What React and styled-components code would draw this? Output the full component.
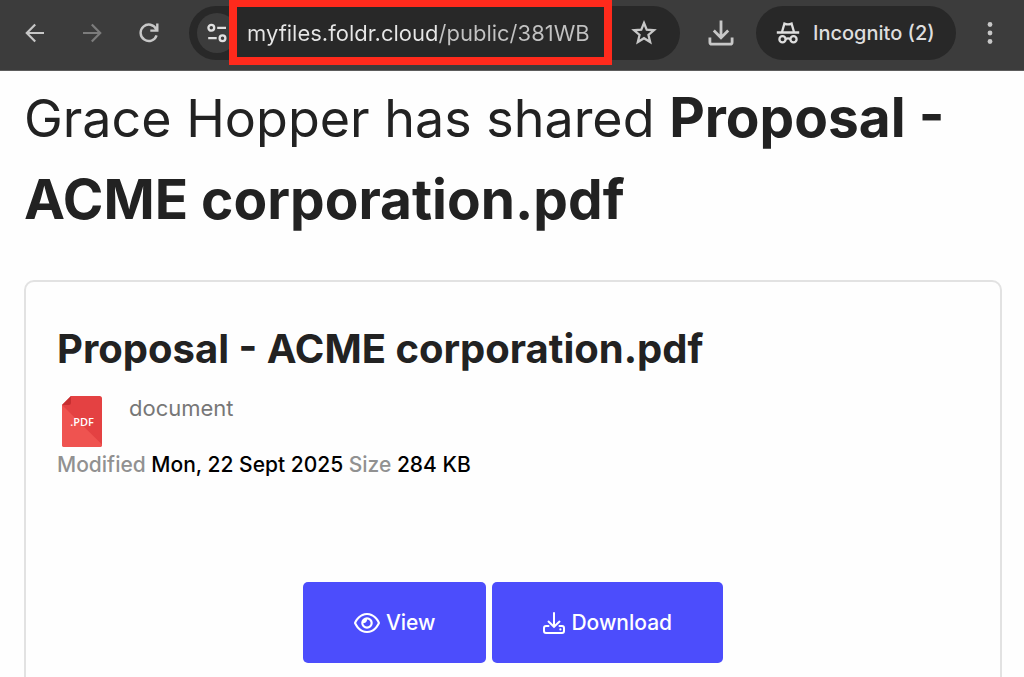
import React from 'react';
import styled, { createGlobalStyle } from 'styled-components';
import { FaRegEye } from 'react-icons/fa6';

const GlobalStyle = createGlobalStyle`
  * {
    box-sizing: border-box;
  }
  body {
    margin: 0;
    background: #fefefe;
    font-family: Inter, "Liberation Sans", sans-serif;
  }
`;

const Browser = styled.div`
  display: flex;
  flex-direction: column;
  height: 100vh;
  overflow: hidden;
`;

const Toolbar = styled.header`
  display: flex;
  align-items: center;
  flex: none;
  height: 71px;
  padding: 0 0 5px 16px;
  background: #3c3c3c;
  border-bottom: 1px solid #5c5c5c;
`;

const NavButtons = styled.nav`
  display: flex;
  gap: 20px;
  margin-right: 22px;
`;

const IconButton = styled.button`
  display: flex;
  align-items: center;
  justify-content: center;
  flex: none;
  width: ${props => props.$width || 37}px;
  height: 40px;
  padding: 0;
  border: 0;
  border-radius: 20px;
  background: ${props => props.$filled ? '#3c3c3c' : 'transparent'};
  color: ${props => props.disabled ? '#7c7c7c' : '#c7c7c7'};
`;

const AddressBar = styled.div`
  display: flex;
  align-items: center;
  flex: 1;
  height: 54px;
  margin-right: 6px;
  padding: 0 18px 0 8px;
  border-radius: 27px;
  background: #282828;
`;

const UrlField = styled.div`
  position: relative;
  flex: 1;
  height: 54px;
  margin-right: 21px;

  &::after {
    content: '';
    position: absolute;
    inset: -7px -8px -5px;
    border: 8px solid #ff2a1c;
    pointer-events: none;
  }
`;

const UrlInput = styled.input`
  width: 100%;
  height: 54px;
  padding: 0 0 0 10px;
  border: 0;
  outline: 0;
  background: linear-gradient(to right, #e6e6e6 202px, #c2c2c2 202px);
  background-clip: text;
  color: transparent;
  font: 400 22px Inter, "Liberation Sans", sans-serif;
`;

const IncognitoBadge = styled.button`
  display: flex;
  align-items: center;
  gap: 13px;
  flex: none;
  width: 200px;
  height: 54px;
  padding: 0 0 0 20px;
  border: 0;
  border-radius: 27px;
  background: #282828;
  color: #dedede;
  font: 500 20px Inter, "Liberation Sans", sans-serif;
  white-space: nowrap;
`;

const Page = styled.main`
  padding: 6px 22px 0 24px;
`;

const Title = styled.h1`
  margin: 0 0 39px;
  color: #222;
  font-size: 52px;
  font-weight: 400;
  line-height: 81px;

  strong {
    font-size: 55px;
    font-weight: 700;
  }
`;

const Card = styled.section`
  padding: 39px 31px 80px;
  border: 2px solid #e2e2e2;
  border-radius: 10px;
`;

const FileName = styled.h2`
  margin: 0 0 19px;
  color: #222;
  font-size: 40px;
  font-weight: 700;
  line-height: 56px;
`;

const FileRow = styled.div`
  display: flex;
  gap: 27px;
  padding-left: 5px;
  color: #777;
  font-size: 22px;
  line-height: 24px;
`;

const FileMeta = styled.p`
  margin: 5px 0 104px;
  color: #000;
  font-size: 21px;
  font-weight: 500;
  line-height: 26px;
`;

const Label = styled.span`
  color: #919191;
`;

const Actions = styled.div`
  display: flex;
  justify-content: center;
  gap: 6px;
`;

const ActionButton = styled.button`
  display: flex;
  align-items: center;
  gap: 6px;
  height: 81px;
  padding: 0 51px;
  border: 0;
  border-radius: 5px;
  background: #4c4dfc;
  color: #fff;
  font: 500 21px Inter, "Liberation Sans", sans-serif;
`;

const BackIcon = () => (
  <svg width="20" height="20" viewBox="0 0 20 20" fill="none" stroke="currentColor" strokeWidth="2.2">
    <path d="M19 10H2.2M10.2 1.4L1.8 10l8.4 8.6" />
  </svg>
);

const ForwardIcon = () => (
  <svg width="20" height="20" viewBox="0 0 20 20" fill="none" stroke="currentColor" strokeWidth="2.2">
    <path d="M1 10h16.8M9.8 1.4l8.4 8.6-8.4 8.6" />
  </svg>
);

const ReloadIcon = () => (
  <svg width="20" height="20" viewBox="0 0 20 20" fill="none" stroke="currentColor" strokeWidth="2.4">
    <path d="M17.6 12.4A8.2 8.2 0 1 1 17.2 6.2M18.3 .6v7h-7" />
  </svg>
);

const TuneIcon = () => (
  <svg width="20" height="20" viewBox="0 0 20 20" fill="none" stroke="#e0e0e0" strokeWidth="2.3">
    <circle cx="4.3" cy="4.8" r="2.9" />
    <path d="M10.2 4.8H19M1.2 15.2h8.5" />
    <circle cx="15.5" cy="15.2" r="2.9" />
  </svg>
);

const StarIcon = () => (
  <svg width="26" height="26" viewBox="0 0 24 24" fill="none" stroke="currentColor" strokeWidth="2.1">
    <path d="M12 2.8l2.5 6.2 6.7.5-5.1 4.3 1.6 6.5-5.7-3.5-5.7 3.5 1.6-6.5-5.1-4.3 6.7-.5z" />
  </svg>
);

const SaveIcon = () => (
  <svg width="26" height="26" viewBox="0 0 26 26" fill="none" stroke="currentColor" strokeWidth="2.8">
    <path d="M13 .5v17M5.8 10.6L13 17.8l7.2-7.2M1.9 17.5v4.7q0 2 2 2h18.2q2 0 2-2v-4.7" />
  </svg>
);

const IncognitoIcon = () => (
  <svg width="24" height="24" viewBox="0 0 24 24" fill="none" stroke="currentColor" strokeWidth="2.3">
    <path d="M.8 11.500h22.400M6 11L8.400 2.600q3.600 1.600 7.200 0L18 11M9.600 18q2.400-1.200 4.800 0" />
    <circle cx="6.500" cy="18.300" r="3.100" />
    <circle cx="17.500" cy="18.300" r="3.100" />
  </svg>
);

const MenuIcon = () => (
  <svg width="6" height="24" viewBox="0 0 6 24" fill="currentColor">
    <circle cx="3" cy="3.5" r="2.4" />
    <circle cx="3" cy="12" r="2.4" />
    <circle cx="3" cy="20.5" r="2.4" />
  </svg>
);

const PdfIcon = () => (
  <svg width="40" height="51" viewBox="0 0 40 51">
    <path d="M9 0h28.5Q40 0 40 2.5v46Q40 51 37.5 51h-35Q0 51 0 48.5V9z" fill="#e44142" />
    <path d="M0 9l40 39.5Q40 51 37.5 51h-35Q0 51 0 48.5z" fill="#ef5350" />
    <path d="M9 0v6.5Q9 9 6.5 9H0z" fill="#c62f31" />
    <text x="20" y="30" fill="#fff" fontSize="11" fontWeight="600" fontFamily="Open Sans, sans-serif" textAnchor="middle">.PDF</text>
  </svg>
);

const DownloadIcon = () => (
  <svg width="22" height="22" viewBox="0 0 22 22" fill="none" stroke="currentColor" strokeWidth="2" strokeLinecap="round">
    <path d="M11 1v13.5M5.5 9.6L11 14.8l5.5-5.2" />
    <path d="M5.5 14H3Q1 14 1 16v3q0 2 2 2h16q2 0 2-2v-3q0-2-2-2h-2.5" />
    <circle cx="17.4" cy="17.4" r="1.1" fill="currentColor" stroke="none" />
  </svg>
);

const App = () => (
  <>
    <GlobalStyle />
    <Browser>
      <Toolbar>
        <NavButtons>
          <IconButton aria-label="Back"><BackIcon /></IconButton>
          <IconButton aria-label="Forward" disabled><ForwardIcon /></IconButton>
          <IconButton aria-label="Reload"><ReloadIcon /></IconButton>
        </NavButtons>
        <AddressBar>
          <IconButton aria-label="Site information" $width={40} $filled><TuneIcon /></IconButton>
          <UrlField>
            <UrlInput aria-label="Address" defaultValue="myfiles.foldr.cloud/public/381WB" spellCheck="false" />
          </UrlField>
          <IconButton aria-label="Bookmark"><StarIcon /></IconButton>
        </AddressBar>
        <IconButton aria-label="Downloads" $width={70}><SaveIcon /></IconButton>
        <IncognitoBadge>
          <IncognitoIcon />
          Incognito (2)
        </IncognitoBadge>
        <IconButton aria-label="Menu" $width={68}><MenuIcon /></IconButton>
      </Toolbar>
      <Page>
        <Title>
          Grace Hopper has shared <strong>Proposal - ACME corporation.pdf</strong>
        </Title>
        <Card>
          <FileName>Proposal - ACME corporation.pdf</FileName>
          <FileRow>
            <PdfIcon />
            <span>document</span>
          </FileRow>
          <FileMeta>
            <Label>Modified</Label> Mon, 22 Sept 2025 <Label>Size</Label> 284 KB
          </FileMeta>
          <Actions>
            <ActionButton><FaRegEye size={26} />View</ActionButton>
            <ActionButton><DownloadIcon />Download</ActionButton>
          </Actions>
        </Card>
      </Page>
    </Browser>
  </>
);

export default App;
